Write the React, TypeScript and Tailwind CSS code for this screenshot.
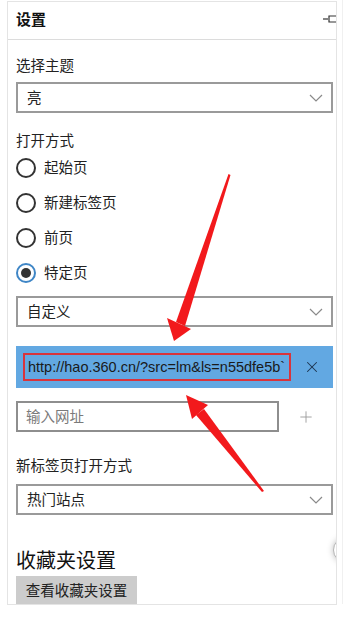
import { X, Plus } from 'lucide-react';

const font = { fontFamily: '"Noto Sans CJK SC", "Noto Sans", sans-serif' };

function Chevron() {
  return (
    <svg width="14" height="8" viewBox="0 0 14 8" className="mr-[8px] flex-shrink-0">
      <path d="M1 1 L7 7 L13 1" fill="none" stroke="#8a8a8a" strokeWidth="1.2" />
    </svg>
  );
}

function Select({ value }: { value: string }) {
  return (
    <div className="flex h-[31px] items-center justify-between border-2 border-[#9a9a9a] bg-white pl-[9px]">
      <span className="text-[14.5px] leading-none text-[#222]">{value}</span>
      <Chevron />
    </div>
  );
}

function Radio({ label, checked }: { label: string; checked?: boolean }) {
  return (
    <div className="flex h-[35px] items-center gap-[8px]">
      <div
        className={
          checked
            ? 'flex h-[20px] w-[20px] items-center justify-center rounded-full border-2 border-[#3f86c6]'
            : 'h-[20px] w-[20px] rounded-full border-2 border-[#333]'
        }
      >
        {checked && <div className="h-[10px] w-[10px] rounded-full bg-[#333]" />}
      </div>
      <span className="text-[14.5px] leading-none text-[#222]">{label}</span>
    </div>
  );
}

export default function App() {
  return (
    <div className="relative h-[620px] w-[352px] overflow-hidden bg-white pt-px" style={font}>
      {/* Settings pane */}
      <div className="relative ml-[7px] w-[330px] overflow-hidden border-x border-t border-b border-[#e4e4e4]">
        {/* Header */}
        <div className="flex h-[38px] items-center justify-between border-b border-[#dcdcdc] pb-[3px] pl-[8px]">
          <span className="text-[15px] font-bold text-[#111]">设置</span>
          <svg width="14" height="10" viewBox="0 0 14 10" className="mr-[-1px]">
            <path d="M0 5 H5" stroke="#333" strokeWidth="1.2" />
            <path d="M14 2 H6 V8 H14" fill="none" stroke="#333" strokeWidth="1.2" />
          </svg>
        </div>

        <div className="flex flex-col pl-[8px] pr-[3px]">
          <span className="mt-[15px] text-[14.5px] leading-[20px] text-[#222]">选择主题</span>
          <div className="mt-[7px]">
            <Select value="亮" />
          </div>

          <span className="mt-[17px] text-[14.5px] leading-[20px] text-[#222]">打开方式</span>
          <Radio label="起始页" />
          <Radio label="新建标签页" />
          <Radio label="前页" />
          <Radio label="特定页" checked />

          <div className="mt-[6px]">
            <Select value="自定义" />
          </div>

          {/* Selected page */}
          <div className="mt-[19px] flex h-[42px] items-center bg-[#62a8e2] pl-[7px]">
            <div className="flex h-[28px] w-[268px] items-center overflow-hidden whitespace-nowrap border-2 border-[#d8343c] pl-[3px]">
              <span className="text-[14.5px] leading-none text-[#1a1a1a]" style={{ fontFamily: '"Liberation Sans", Arial, sans-serif' }}>
                http://hao.360.cn/?src=lm&amp;ls=n55dfe5b`
              </span>
            </div>
            <div className="flex flex-1 justify-center">
              <X className="h-[18px] w-[18px] text-[#1d3550]" strokeWidth={1.4} />
            </div>
          </div>

          <div className="mt-[13px] flex items-center">
            <div className="flex h-[31px] w-[263px] items-center border-2 border-[#8e8e8e] pl-[8px]">
              <span className="text-[14.5px] leading-none text-[#7a7a7a]">输入网址</span>
            </div>
            <div className="flex flex-1 justify-center">
              <Plus className="h-[18px] w-[18px] text-[#9a9a9a]" strokeWidth={1.2} />
            </div>
          </div>

          <span className="mt-[23px] text-[14.5px] leading-[20px] text-[#222]">新标签页打开方式</span>
          <div className="mt-[9px]">
            <Select value="热门站点" />
          </div>

          <span className="mt-[31px] text-[20px] leading-[28px] text-[#111]">收藏夹设置</span>
          <div className="mt-[2px] flex h-[28px] w-[121px] items-center justify-center bg-[#cccccc]">
            <span className="text-[14.5px] leading-none text-[#222]">查看收藏夹设置</span>
          </div>
        </div>

        {/* partially hidden round button at the edge */}
        <div className="absolute left-[325px] top-[535px] h-[26px] w-[26px] rounded-full border border-[#b5b5b5] bg-white shadow-[0_0_6px_rgba(0,0,0,0.25)]" />
      </div>
      <div className="absolute left-[342px] top-0 h-[604px] w-px bg-[#f0f0f0]" />

      {/* Red annotation arrows */}
      <svg className="pointer-events-none absolute left-0 top-0" width="352" height="620" viewBox="0 0 352 620">
        <polygon points="228.5,174 230.5,175 185,326 176,322" fill="#f2191c" />
        <polygon points="174,341 167,318 191,329" fill="#f2191c" />
        <polygon points="262,492 264,491 204,409 196,415" fill="#f2191c" />
        <polygon points="186,395 208,405 192,419" fill="#f2191c" />
      </svg>
    </div>
  );
}
